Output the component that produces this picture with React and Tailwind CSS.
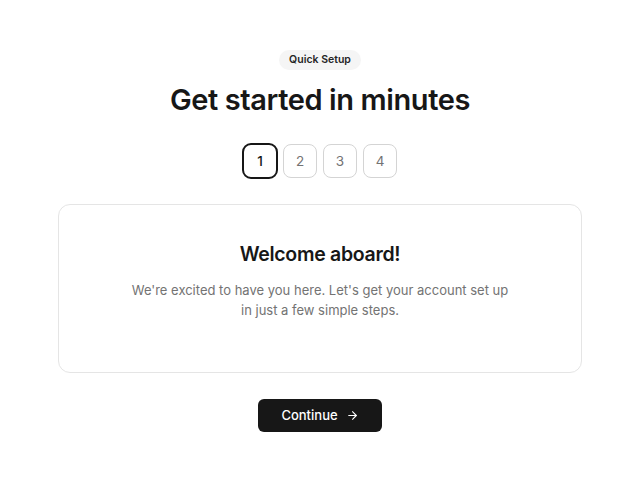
import { ArrowRight } from 'lucide-react';

const steps = [1, 2, 3, 4];

export default function App() {
  const current = 1;
  return (
    <div className="min-h-screen bg-white flex flex-col items-center pt-[50px] font-['Inter',sans-serif] text-neutral-900">
      <span className="px-[10px] h-[20px] leading-[20px] rounded-full bg-neutral-100 text-[10.5px] font-semibold text-neutral-800">
        Quick Setup
      </span>
      <h1 className="mt-[12px] text-[29px] leading-[36px] font-semibold tracking-[-0.4px]">
        Get started in minutes
      </h1>
      <div className="mt-[25px] flex gap-[4px]">
        {steps.map((s) => (
          <div key={s} className="w-[36px] h-[36px] flex items-center justify-center">
            <div
              className={
                s === current
                  ? 'w-[37px] h-[36px] rounded-[9px] border-2 border-neutral-900 flex items-center justify-center text-[13.5px] font-medium text-neutral-900'
                  : 'w-[34px] h-[34px] rounded-[8px] border-[1.5px] border-neutral-300 flex items-center justify-center text-[13.5px] text-neutral-500'
              }
            >
              {s}
            </div>
          </div>
        ))}
      </div>
      <div className="mt-[25px] w-[524px] rounded-xl border border-neutral-200 flex flex-col items-center pt-[35px] pb-[52px]">
        <h2 className="text-[19.5px] leading-[28px] font-semibold tracking-[-0.3px]">Welcome aboard!</h2>
        <p className="mt-[12px] w-[380px] text-center text-[13px] leading-[20px] text-neutral-500">
          We're excited to have you here. Let's get your account set up in just a few simple steps.
        </p>
      </div>
      <button className="mt-[26px] w-[124px] h-[33px] rounded-md bg-[#171717] text-white text-[13px] font-medium flex items-center justify-center gap-[8px]">
        Continue
        <ArrowRight size={13} strokeWidth={2} />
      </button>
    </div>
  );
}
